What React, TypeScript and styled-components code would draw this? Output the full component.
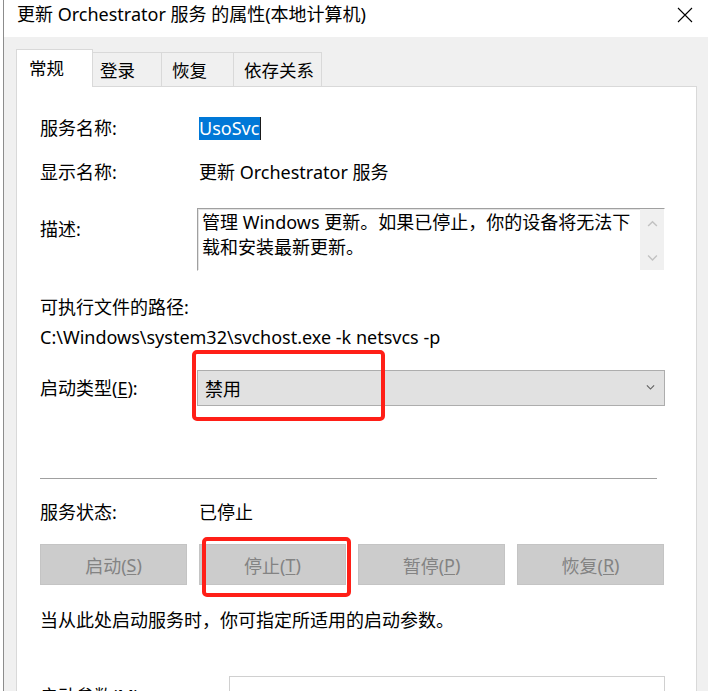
import styled, { createGlobalStyle } from "styled-components";

const GlobalStyle = createGlobalStyle`
  html, body {
    margin: 0;
    padding: 0;
    background: #ffffff;
  }
  body {
    width: 708px;
    height: 691px;
    overflow: hidden;
    font-family: "Noto Sans", "Noto Sans CJK SC", sans-serif;
    color: #000;
  }
`;

const Window = styled.div`
  margin-left: 3px;
  height: 691px;
  border-left: 1px solid #8c8c8c;
  display: flex;
  flex-direction: column;
  overflow: hidden;
`;

const TitleBar = styled.div`
  flex: none;
  height: 37px;
  background: #fff;
  display: flex;
  align-items: flex-start;
  justify-content: space-between;
  padding: 1px 15px 0 13px;
  box-sizing: border-box;
`;

const Title = styled.div`
  font-size: 18px;
  line-height: 27px;
  white-space: nowrap;
`;

const CloseButton = styled.div`
  width: 16px;
  height: 16px;
  margin-top: 6px;
  display: flex;
`;

const Body = styled.div`
  flex: 1;
  background: #f0f0f0;
  padding: 12px 11px 0 12px;
  display: flex;
  flex-direction: column;
  min-height: 0;
`;

const TabRow = styled.div`
  display: flex;
  align-items: flex-end;
  flex: none;
`;

const Tab = styled.div<{ $active?: boolean; $w: number; $pl: number }>`
  box-sizing: border-box;
  width: ${(p) => p.$w}px;
  height: ${(p) => (p.$active ? 38 : 34)}px;
  margin-bottom: ${(p) => (p.$active ? -1 : 0)}px;
  margin-left: ${(p) => (p.$active ? 0 : -1)}px;
  padding-left: ${(p) => p.$pl}px;
  padding-bottom: ${(p) => (p.$active ? 3 : 0)}px;
  background: ${(p) => (p.$active ? "#ffffff" : "#f0f0f0")};
  border: 1px solid #d9d9d9;
  border-bottom: none;
  position: relative;
  z-index: ${(p) => (p.$active ? 2 : 1)};
  display: flex;
  align-items: center;
  font-size: 17.5px;
  white-space: nowrap;
`;

const Panel = styled.div`
  flex: 1;
  position: relative;
  background: #fff;
  border: 1px solid #d9d9d9;
  border-bottom: none;
  padding: 29px 31px 0 23px;
  display: flex;
  flex-direction: column;
  font-size: 18px;
`;

const Row = styled.div<{ $mt: number; $cols?: string; $align?: string }>`
  display: grid;
  grid-template-columns: ${(p) => p.$cols ?? "157px 1fr"};
  align-items: ${(p) => p.$align ?? "center"};
  margin-top: ${(p) => p.$mt}px;
`;

const Label = styled.div<{ $mt?: number }>`
  line-height: 24px;
  white-space: nowrap;
  margin-top: ${(p) => p.$mt ?? 0}px;
`;

const Value = styled.div`
  line-height: 24px;
  padding-left: 2px;
  white-space: nowrap;
`;

const Selected = styled.span`
  display: inline-block;
  background: #0078d7;
  color: #fff;
  line-height: 23px;
  padding-right: 1px;
  border-right: 1px solid #1a1a1a;
`;

const Line = styled.div<{ $mt: number }>`
  line-height: 24px;
  margin-top: ${(p) => p.$mt}px;
  white-space: nowrap;
`;

const TextBox = styled.div`
  height: 63px;
  box-sizing: border-box;
  border: 1px solid;
  border-color: #a0a0a0 #ffffff #ffffff #a0a0a0;
  box-shadow: inset 1px 1px 0 #e3e3e3;
  display: flex;
`;

const TextBoxText = styled.div`
  flex: 1;
  padding: 1px 4px 0 4px;
  line-height: 25px;
  white-space: nowrap;
`;

const ScrollBar = styled.div`
  width: 24px;
  flex: none;
  background: #f0f0f0;
  display: flex;
  flex-direction: column;
  justify-content: space-between;
  align-items: center;
  padding: 11px 0 8px;
`;

const Select = styled.div`
  height: 36px;
  box-sizing: border-box;
  background: #e1e1e1;
  border: 1px solid #adadad;
  display: flex;
  align-items: center;
  justify-content: space-between;
  padding: 0 9px 0 7px;
`;

const Separator = styled.div`
  margin-top: 72px;
  margin-right: 8px;
  height: 1px;
  background: #a0a0a0;
  box-shadow: 0 1px 0 #ffffff;
`;

const ButtonRow = styled.div`
  display: grid;
  grid-template-columns: repeat(4, 1fr);
  column-gap: 12px;
  margin-top: 20px;
  margin-right: 1px;
`;

const Button = styled.div`
  height: 41px;
  box-sizing: border-box;
  background: #cccccc;
  border: 1px solid #c4c4c4;
  color: #838383;
  display: flex;
  align-items: center;
  justify-content: center;
  white-space: nowrap;
`;

const U = styled.span`
  text-decoration: underline;
  text-underline-offset: 2px;
`;

const Input = styled.div`
  height: 36px;
  box-sizing: border-box;
  border: 1px solid #d0d0d0;
  background: #fff;
`;

const Highlight = styled.div<{ $x: number; $y: number; $w: number; $h: number }>`
  position: absolute;
  left: ${(p) => p.$x}px;
  top: ${(p) => p.$y}px;
  width: ${(p) => p.$w}px;
  height: ${(p) => p.$h}px;
  box-sizing: border-box;
  border: 4px solid #ff1f17;
  border-radius: 5px;
  z-index: 5;
  pointer-events: none;
`;

const Chevron = ({ up, color, w = 10 }: { up?: boolean; color: string; w?: number }) => (
  <svg width={w} height={w * 0.6} viewBox="0 0 10 6">
    <polyline
      points={up ? "1,5.5 5,1.5 9,5.5" : "1,0.5 5,4.5 9,0.5"}
      fill="none"
      stroke={color}
      strokeWidth="1.3"
    />
  </svg>
);

export default function App(): JSX.Element {
  return (
    <>
      <GlobalStyle />
      <Window>
        <TitleBar>
          <Title>更新 Orchestrator 服务 的属性(本地计算机)</Title>
          <CloseButton>
            <svg width="16" height="16" viewBox="0 0 16 16">
              <path d="M1 1 L15 15 M15 1 L1 15" stroke="#000" strokeWidth="1.1" />
            </svg>
          </CloseButton>
        </TitleBar>
        <Body>
          <TabRow>
            <Tab $active $w={77} $pl={12}>常规</Tab>
            <Tab $w={70} $pl={7}>登录</Tab>
            <Tab $w={73} $pl={10}>恢复</Tab>
            <Tab $w={89} $pl={10}>依存关系</Tab>
          </TabRow>
          <Panel>
            <Row $mt={0}>
              <Label>服务名称:</Label>
              <Value>
                <Selected>UsoSvc</Selected>
              </Value>
            </Row>
            <Row $mt={20}>
              <Label>显示名称:</Label>
              <Value>更新 Orchestrator 服务</Value>
            </Row>
            <Row $mt={24} $align="start">
              <Label $mt={9}>描述:</Label>
              <TextBox>
                <TextBoxText>
                  管理 Windows 更新。如果已停止，你的设备将无法下
                  <br />
                  载和安装最新更新。
                </TextBoxText>
                <ScrollBar>
                  <Chevron up color="#c2c2c2" w={11} />
                  <Chevron color="#c2c2c2" w={11} />
                </ScrollBar>
              </TextBox>
            </Row>
            <Line $mt={24}>可执行文件的路径:</Line>
            <Line $mt={6}>C:\Windows\system32\svchost.exe -k netsvcs -p</Line>
            <Row $mt={21}>
              <Label>
                启动类型(<U>E</U>):
              </Label>
              <Select>
                <span>禁用</span>
                <Chevron color="#606060" w={9} />
              </Select>
            </Row>
            <Separator />
            <Row $mt={21}>
              <Label>服务状态:</Label>
              <Value>已停止</Value>
            </Row>
            <ButtonRow>
              <Button>
                启动(<U>S</U>)
              </Button>
              <Button>
                停止(<U>T</U>)
              </Button>
              <Button>
                暂停(<U>P</U>)
              </Button>
              <Button>
                恢复(<U>R</U>)
              </Button>
            </ButtonRow>
            <Line $mt={23}>当从此处启动服务时，你可指定所适用的启动参数。</Line>
            <Row $mt={44} $cols="189px 1fr" $align="start">
              <Label $mt={8}>
                启动参数(<U>M</U>):
              </Label>
              <Input />
            </Row>
            <Highlight $x={175} $y={263} $w={193} $h={71} />
            <Highlight $x={185} $y={450} $w={149} $h={60} />
          </Panel>
        </Body>
      </Window>
    </>
  );
}
